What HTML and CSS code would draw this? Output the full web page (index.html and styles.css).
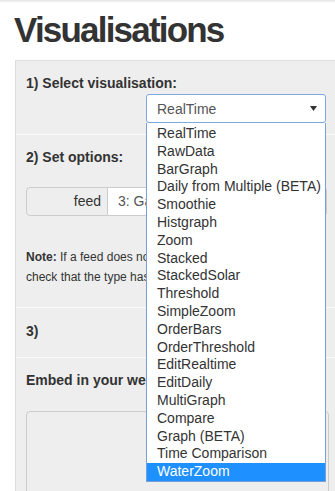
FILE: index.html
```html
<!DOCTYPE html>
<html>
<head>
<meta charset="utf-8">
<link rel="stylesheet" href="styles.css">
</head>
<body>
<div class="topbar"></div>
<div class="page">
  <h1 class="title">Visualisations</h1>
  <div class="panel">
    <div class="row row-first">
      <div class="label">1) Select visualisation:</div>
      <div class="select-wrap">
        <div class="select">
          <span>RealTime</span>
          <svg class="arrow" width="7" height="5" viewBox="0 0 7 5"><polygon points="0,0 7,0 3.5,5" fill="#333"/></svg>
        </div>
        <ul class="dropdown">
          <li>RealTime</li>
          <li>RawData</li>
          <li>BarGraph</li>
          <li>Daily from Multiple (BETA)</li>
          <li>Smoothie</li>
          <li>Histgraph</li>
          <li>Zoom</li>
          <li>Stacked</li>
          <li>StackedSolar</li>
          <li>Threshold</li>
          <li>SimpleZoom</li>
          <li>OrderBars</li>
          <li>OrderThreshold</li>
          <li>EditRealtime</li>
          <li>EditDaily</li>
          <li>MultiGraph</li>
          <li>Compare</li>
          <li>Graph (BETA)</li>
          <li>Time Comparison</li>
          <li class="selected">WaterZoom</li>
        </ul>
      </div>
    </div>
    <div class="row row-options">
      <div class="label">2) Set options:</div>
      <div class="input-group">
        <div class="addon">feed</div>
        <div class="input">3: Garage power</div>
      </div>
      <p class="note"><b>Note:</b> If a feed does not appear in the list,<br>check that the type has been set correctly.</p>
    </div>
    <div class="row row-three">
      <div class="label">3)</div>
    </div>
    <div class="row row-embed">
      <div class="label">Embed in your website:</div>
      <div class="embed"></div>
    </div>
  </div>
</div>
</body>
</html>
```

FILE: styles.css
```css
html, body {
  overflow: hidden;
}
body {
  margin: 0;
  background: #fff;
  color: #333;
  font-family: "Liberation Sans", Arial, sans-serif;
}
.topbar {
  height: 3px;
  background: linear-gradient(#e4e4e4, #fff);
}
.page {
  padding-left: 14px;
}
.title {
  margin: 7px 0 10px;
  font-size: 35px;
  line-height: 40px;
  font-weight: bold;
  letter-spacing: -1.8px;
}
.panel {
  box-sizing: border-box;
  width: 325px;
  margin-left: 1px;
  border: 1px solid #ddd;
  background: #eee;
}
.row {
  padding: 12px 10px 11px;
  border-top: 1px solid #fafafa;
}
.row-first {
  border-top: 0;
}
.row-options {
  padding-bottom: 20px;
}
.row-three {
  padding-top: 13px;
  padding-bottom: 16px;
}
.row-embed {
  padding-bottom: 0;
}
.label {
  font-size: 14px;
  line-height: 20px;
  font-weight: bold;
  white-space: nowrap;
}
.select-wrap {
  position: relative;
  margin-top: 1px;
  padding-left: 120px;
}
.select {
  box-sizing: border-box;
  width: 180px;
  height: 29px;
  display: flex;
  align-items: center;
  justify-content: space-between;
  padding: 0 8px 0 10px;
  border: 1px solid #80a8e0;
  border-radius: 3px;
  background: #fff;
  color: #555;
  font-size: 14px;
}
.arrow {
  display: block;
}
.dropdown {
  position: absolute;
  top: 29px;
  left: 120px;
  z-index: 5;
  box-sizing: border-box;
  width: 180px;
  margin: 0;
  padding: 2px 0 0;
  list-style: none;
  background: #fff;
  border: 1px solid #7a9ed6;
  border-top: 0;
}
.dropdown li {
  height: 17.8px;
  line-height: 17.8px;
  padding-left: 10px;
  font-size: 14px;
  color: #333;
  white-space: nowrap;
}
.dropdown li.selected {
  background: #1e90ff;
  color: #fff;
}
.input-group {
  display: flex;
  height: 29px;
  margin-top: 20px;
}
.addon {
  box-sizing: border-box;
  width: 82px;
  padding-right: 6px;
  border: 1px solid #ccc;
  border-radius: 4px 0 0 4px;
  background: #eee;
  text-align: right;
  font-size: 14px;
  line-height: 27px;
}
.input {
  box-sizing: border-box;
  width: 219px;
  padding-left: 10px;
  border: 1px solid #ccc;
  border-left: 0;
  border-radius: 0 4px 4px 0;
  background: #fff;
  color: #555;
  font-size: 14px;
  line-height: 27px;
  white-space: nowrap;
  overflow: hidden;
}
.note {
  margin: 31px 0 0;
  font-size: 12px;
  line-height: 20px;
}
.embed {
  box-sizing: border-box;
  width: 303px;
  height: 100px;
  margin-top: 21px;
  border: 1px solid #ccc;
  border-radius: 4px;
  background: #eee;
}
```
